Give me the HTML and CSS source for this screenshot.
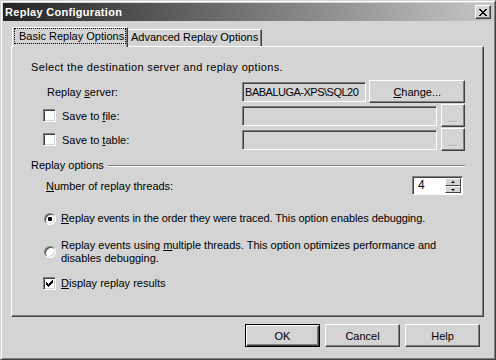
FILE: index.html
```html
<!DOCTYPE html>
<html lang="en">
<head>
  <meta charset="UTF-8">
  <title>Replay Configuration</title>
  <link rel="stylesheet" href="styles.css">
</head>
<body>
  <div class="window">
    <div class="titlebar">
      <span class="title">Replay Configuration</span>
      <button class="close" title="Close">
        <svg width="8" height="7" viewBox="0 0 8 7" shape-rendering="crispEdges">
          <path d="M0 0h2v1h-2z M6 0h2v1h-2z M1 1h2v1h-2z M5 1h2v1h-2z M2 2h4v1h-4z M3 3h2v1h-2z M2 4h4v1h-4z M1 5h2v1h-2z M5 5h2v1h-2z M0 6h2v1h-2z M6 6h2v1h-2z" fill="#000"/>
        </svg>
      </button>
    </div>

    <div class="main">
      <div class="tabs">
        <div class="tab active"><span class="focus">Basic Replay Options</span></div>
        <div class="tab">Advanced Replay Options</div>
      </div>

      <div class="panel">
        <p class="intro">Select the destination server and replay options.</p>

        <div class="row first">
          <div class="label plain"><span>Replay <u>s</u>erver:</span></div>
          <div class="field server">BABALUGA-XPS\SQL20</div>
          <button class="btn change"><u>C</u>hange...</button>
        </div>

        <div class="row">
          <label class="label"><span class="check"></span><span>Save to <u>f</u>ile:</span></label>
          <div class="field wide"></div>
          <button class="btn dots" disabled>...</button>
        </div>

        <div class="row">
          <label class="label"><span class="check"></span><span>Save to <u>t</u>able:</span></label>
          <div class="field wide"></div>
          <button class="btn dots" disabled>...</button>
        </div>

        <div class="group">
          <span>Replay options</span>
          <span class="rule"></span>
        </div>

        <div class="threads">
          <span><u>N</u>umber of replay threads:</span>
          <div class="spin">
            <span class="spin-value">4</span>
            <span class="spin-buttons">
              <span class="arrow up"></span>
              <span class="arrow down"></span>
            </span>
          </div>
        </div>

        <label class="option first-option">
          <span class="radio checked"></span>
          <span><u>R</u>eplay events in the order they were traced. This option enables debugging.</span>
        </label>

        <label class="option second-option">
          <span class="radio"></span>
          <span>Replay events using <u>m</u>ultiple threads. This option optimizes performance and<br>disables debugging.</span>
        </label>

        <label class="option display">
          <span class="check on">
            <svg width="7" height="7" viewBox="0 0 7 7" shape-rendering="crispEdges">
              <path d="M0 2h1v3h-1z M1 3h1v3h-1z M2 4h1v3h-1z M3 3h1v3h-1z M4 2h1v3h-1z M5 1h1v3h-1z M6 0h1v3h-1z" fill="#000"/>
            </svg>
          </span>
          <span><u>D</u>isplay replay results</span>
        </label>
      </div>

      <div class="buttons">
        <button class="btn action default">OK</button>
        <button class="btn action">Cancel</button>
        <button class="btn action">Help</button>
      </div>
    </div>
  </div>
</body>
</html>
```

FILE: styles.css
```css
* {
  box-sizing: border-box;
}
body {
  margin: 0;
  font-family: "Liberation Sans", Arial, sans-serif;
  font-size: 11px;
  color: #000;
  background: #d4d4d4;
}
button {
  font-family: inherit;
  font-size: 11px;
  color: #000;
  padding: 0;
}
u {
  text-decoration: underline;
  text-underline-offset: 1px;
}

.window {
  width: 496px;
  height: 360px;
  background: #d4d4d4;
  border: 1px solid;
  border-color: #d4d4d4 #404040 #404040 #d4d4d4;
  box-shadow: inset 1px 1px #fff, inset -1px -1px #808080;
  padding: 2px;
  display: flex;
  flex-direction: column;
}

.titlebar {
  height: 18px;
  display: flex;
  align-items: center;
  justify-content: space-between;
  background: linear-gradient(to right, #242424, #c6c6c6);
  padding: 0 2px 0 2px;
}
.title {
  color: #fff;
  font-weight: bold;
  font-size: 11px;
  letter-spacing: 0.3px;
}
.close {
  width: 16px;
  height: 14px;
  display: flex;
  align-items: center;
  justify-content: center;
  background: #d4d4d4;
  border: 1px solid;
  border-color: #fff #404040 #404040 #fff;
  box-shadow: inset -1px -1px #808080;
}

.main {
  padding: 6px 9px 0 8px;
}

.tabs {
  display: flex;
  align-items: flex-end;
  height: 19px;
}
.tab {
  height: 17px;
  padding-left: 3px;
  line-height: 15px;
  background: #d4d4d4;
  border: 1px solid;
  border-bottom: none;
  border-color: #fff #404040 transparent #fff;
  box-shadow: inset -1px 0 #808080;
  white-space: nowrap;
  width: 134px;
}
.tab.active {
  position: relative;
  z-index: 1;
  width: 116px;
  height: 20px;
  margin-left: 1px;
  margin-bottom: -1px;
  padding: 0 1px;
  border-left-color: #fff;
}
.tab.active + .tab {
  border-left: none;
}
.focus {
  display: block;
  height: 16px;
  border: 1px dotted #000;
  padding-left: 4px;
  line-height: 14px;
}

.panel {
  height: 271px;
  border: 1px solid;
  border-color: #fff #404040 #404040 #fff;
  box-shadow: inset -1px -1px #808080;
  padding: 14px 18px 0 19px;
}
.intro {
  margin: 0;
  line-height: 13px;
  letter-spacing: 0.35px;
}

.row {
  display: flex;
  align-items: center;
  height: 23px;
  margin-top: 1px;
}
.row.first {
  margin-top: 6px;
}
.label {
  width: 212px;
  display: flex;
  align-items: center;
  padding-left: 12px;
}
.label.plain {
  padding-left: 16px;
}
.label .check {
  margin-right: 6px;
}

.field {
  height: 20px;
  border: 1px solid;
  border-color: #808080 #fff #fff #808080;
  box-shadow: inset 1px 1px #404040, inset -1px -1px #d4d4d4;
  background: #d4d4d4;
  padding: 0 2px;
  line-height: 18px;
  overflow: hidden;
  white-space: nowrap;
}
.field.server {
  width: 125px;
  font-size: 11px;
  letter-spacing: -0.5px;
  padding-left: 2px;
}
.field.wide {
  width: 196px;
}

.btn {
  height: 23px;
  background: #d4d4d4;
  border: 1px solid;
  border-color: #fff #404040 #404040 #fff;
  box-shadow: inset -1px -1px #808080;
  text-align: center;
}
.btn.change {
  width: 96px;
  margin-left: 3px;
}
.btn.dots {
  width: 24px;
  margin-left: 4px;
  color: #808080;
  text-shadow: 1px 1px #fff;
  padding-top: 5px;
  font-size: 10px;
}

.group {
  display: flex;
  align-items: center;
  margin-top: 8px;
  line-height: 13px;
}
.rule {
  flex: 1;
  height: 2px;
  margin-left: 4px;
  border-top: 1px solid #808080;
  border-bottom: 1px solid #fff;
}

.threads {
  display: flex;
  align-items: center;
  justify-content: space-between;
  height: 19px;
  margin-top: 4px;
  padding-left: 15px;
  padding-right: 2px;
}
.spin {
  width: 51px;
  height: 19px;
  display: flex;
  border: 1px solid;
  border-color: #808080 #fff #fff #808080;
  box-shadow: inset 1px 1px #404040;
  background: #fff;
  padding: 1px 1px 1px 1px;
}
.spin-value {
  flex: 1;
  padding-left: 4px;
  font-size: 12px;
  line-height: 15px;
}
.spin-buttons {
  width: 16px;
  display: flex;
  flex-direction: column;
}
.arrow {
  flex: 1;
  position: relative;
  background: #d4d4d4;
  border: 1px solid;
  border-color: #fff #404040 #404040 #fff;
}
.arrow::after {
  content: "";
  position: absolute;
  left: 5px;
  top: 2px;
  border-left: 2px solid transparent;
  border-right: 2px solid transparent;
}
.arrow.up::after {
  border-bottom: 2px solid #000;
}
.arrow.down::after {
  border-top: 2px solid #000;
}

.option {
  display: flex;
  align-items: center;
  line-height: 13px;
  padding-left: 13px;
}
.option .radio {
  margin-right: 5px;
}
.first-option {
  margin-top: 17px;
  letter-spacing: -0.1px;
}
.second-option {
  margin-top: 14px;
}
.display {
  margin-top: 12px;
  padding-left: 12px;
}
.display .check {
  margin-right: 5px;
}

.check {
  flex: none;
  width: 13px;
  height: 13px;
  display: inline-flex;
  align-items: center;
  justify-content: center;
  background: #fff;
  border: 1px solid;
  border-color: #808080 #fff #fff #808080;
  box-shadow: inset 1px 1px #404040, inset -1px -1px #d4d4d4;
}

.radio {
  flex: none;
  position: relative;
  width: 12px;
  height: 12px;
  border-radius: 50%;
  background: #fff;
  border: 1px solid;
  border-color: #808080 #fff #fff #808080;
  box-shadow: inset 1px 1px #404040, inset -1px -1px #d4d4d4;
}
.radio.checked::after {
  content: "";
  position: absolute;
  left: 3px;
  top: 3px;
  width: 4px;
  height: 4px;
  border-radius: 1px;
  background: #000;
}

.buttons {
  display: flex;
  justify-content: flex-end;
  gap: 5px;
  margin-top: 7px;
  padding-right: 4px;
}
.btn.action {
  width: 75px;
}
.btn.default {
  border: 1px solid #000;
  box-shadow: inset 1px 1px #fff, inset -1px -1px #404040, inset -2px -2px #808080;
}
```
